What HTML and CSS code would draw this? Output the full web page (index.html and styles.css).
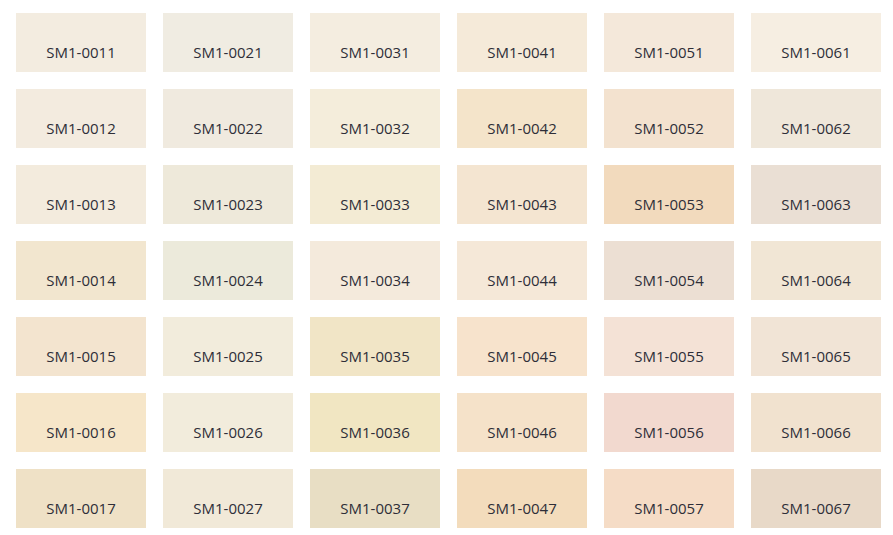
FILE: index.html
```html
<!DOCTYPE html>
<html lang="en">
<head>
<meta charset="utf-8">
<title>SM1 colour chart</title>
<link rel="stylesheet" href="styles.css">
</head>
<body>
<main class="chart">
  <div class="swatch" style="background:#f3ece0">SM1-0011</div>
  <div class="swatch" style="background:#f0ece2">SM1-0021</div>
  <div class="swatch" style="background:#f4ede0">SM1-0031</div>
  <div class="swatch" style="background:#f5ead9">SM1-0041</div>
  <div class="swatch" style="background:#f4e8da">SM1-0051</div>
  <div class="swatch" style="background:#f6eee2">SM1-0061</div>

  <div class="swatch" style="background:#f3ebdf">SM1-0012</div>
  <div class="swatch" style="background:#f0eadf">SM1-0022</div>
  <div class="swatch" style="background:#f4eddb">SM1-0032</div>
  <div class="swatch" style="background:#f4e4ca">SM1-0042</div>
  <div class="swatch" style="background:#f3e2cf">SM1-0052</div>
  <div class="swatch" style="background:#efe7da">SM1-0062</div>

  <div class="swatch" style="background:#f3ebdd">SM1-0013</div>
  <div class="swatch" style="background:#eee9da">SM1-0023</div>
  <div class="swatch" style="background:#f3ebd4">SM1-0033</div>
  <div class="swatch" style="background:#f4e5d1">SM1-0043</div>
  <div class="swatch" style="background:#f2dabd">SM1-0053</div>
  <div class="swatch" style="background:#eadfd4">SM1-0063</div>

  <div class="swatch" style="background:#f2e6cf">SM1-0014</div>
  <div class="swatch" style="background:#eceadb">SM1-0024</div>
  <div class="swatch" style="background:#f4eadc">SM1-0034</div>
  <div class="swatch" style="background:#f5e8d8">SM1-0044</div>
  <div class="swatch" style="background:#ecdfd3">SM1-0054</div>
  <div class="swatch" style="background:#f1e6d5">SM1-0064</div>

  <div class="swatch" style="background:#f3e4cf">SM1-0015</div>
  <div class="swatch" style="background:#f2ecdc">SM1-0025</div>
  <div class="swatch" style="background:#f1e5c6">SM1-0035</div>
  <div class="swatch" style="background:#f7e3cc">SM1-0045</div>
  <div class="swatch" style="background:#f4e2d6">SM1-0055</div>
  <div class="swatch" style="background:#f1e4d6">SM1-0065</div>

  <div class="swatch" style="background:#f6e6c9">SM1-0016</div>
  <div class="swatch" style="background:#f2ecdc">SM1-0026</div>
  <div class="swatch" style="background:#f1e6c2">SM1-0036</div>
  <div class="swatch" style="background:#f5e2c9">SM1-0046</div>
  <div class="swatch" style="background:#f2d9cf">SM1-0056</div>
  <div class="swatch" style="background:#f1e2cf">SM1-0066</div>

  <div class="swatch" style="background:#efe1c6">SM1-0017</div>
  <div class="swatch" style="background:#f1e9d8">SM1-0027</div>
  <div class="swatch" style="background:#e8dec4">SM1-0037</div>
  <div class="swatch" style="background:#f3dcbc">SM1-0047</div>
  <div class="swatch" style="background:#f5dcc6">SM1-0057</div>
  <div class="swatch" style="background:#e8d9c8">SM1-0067</div>
</main>
</body>
</html>
```
FILE: styles.css
```css
html, body {
  margin: 0;
  padding: 0;
  background: #ffffff;
}

.chart {
  display: grid;
  grid-template-columns: repeat(6, 130px);
  grid-auto-rows: 59px;
  column-gap: 17px;
  row-gap: 17px;
  padding: 13px 0 0 16px;
}

.swatch {
  box-sizing: border-box;
  padding-top: 29px;
  text-align: center;
  font-family: "Open Sans", "DejaVu Sans", sans-serif;
  font-size: 15px;
  line-height: 20px;
  color: #2e2e38;
}
```
